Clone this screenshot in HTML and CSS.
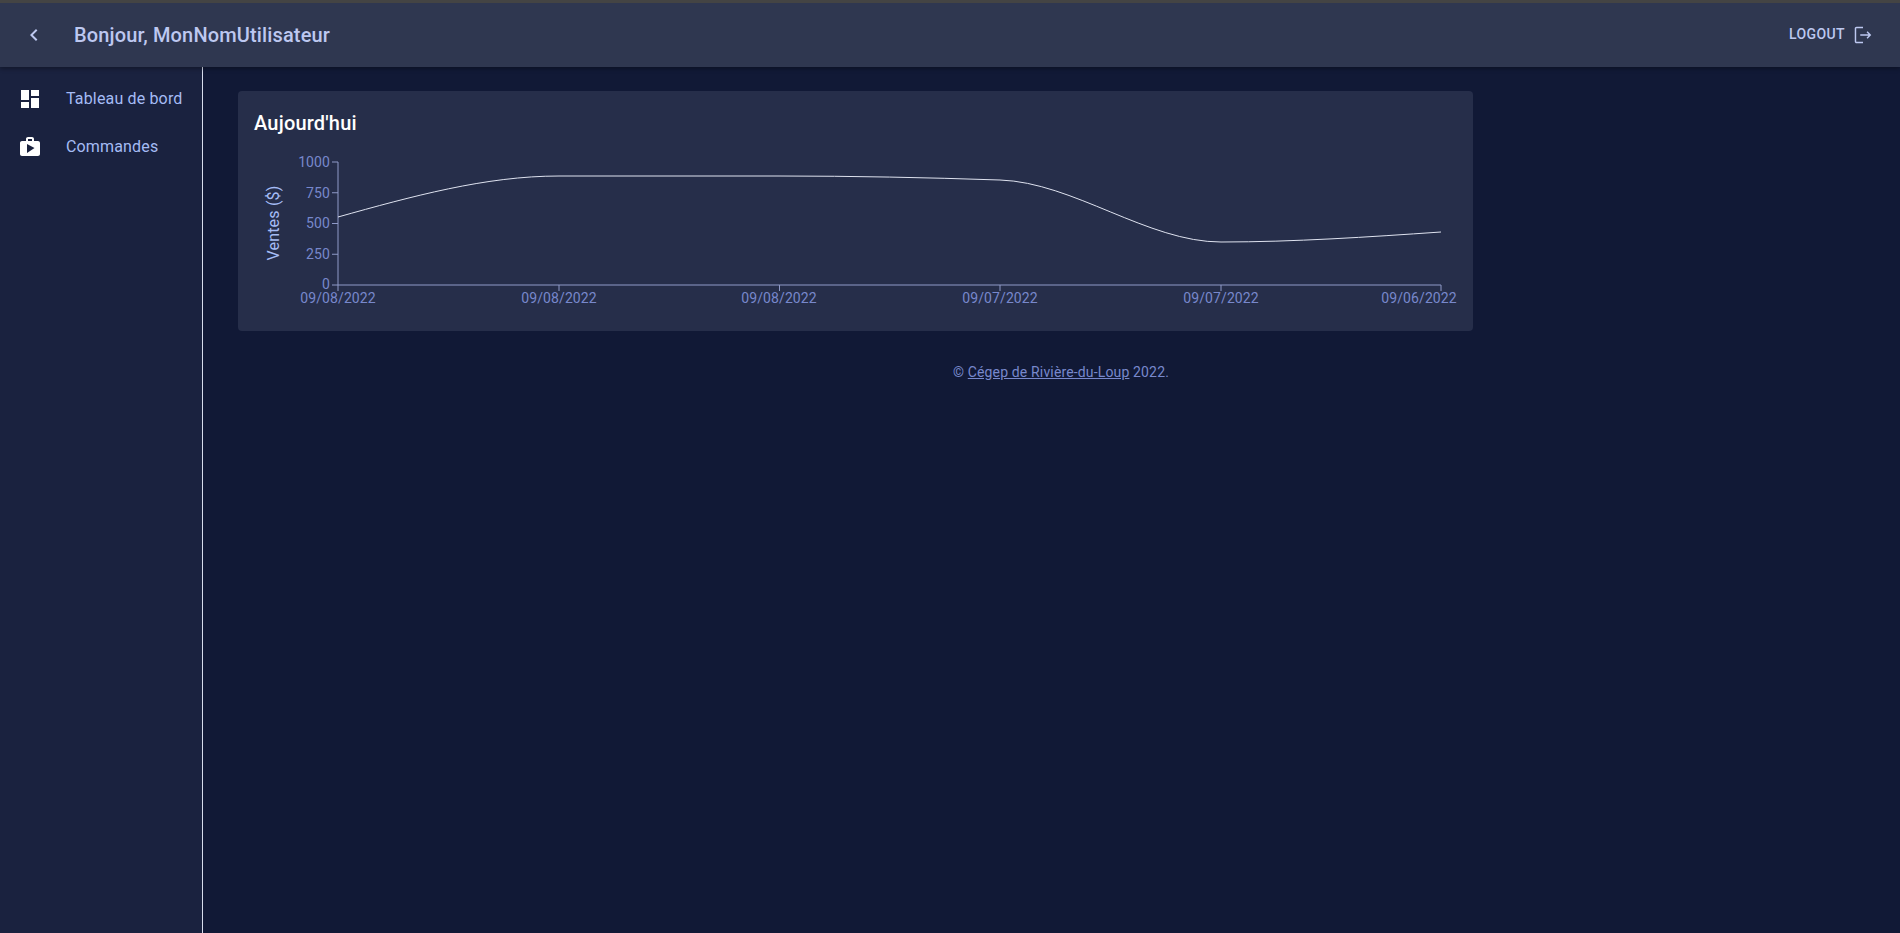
FILE: index.html
```html
<!doctype html>
<html>
<head>
<title>Tableau de bord</title>
<link rel="stylesheet" href="styles.css">
</head>
<body>

<header class="appbar">
    <button class="back" aria-label="back">
        <svg viewBox="0 0 24 24" width="24" height="24"><path d="M15.41 7.41 14 6l-6 6 6 6 1.41-1.41L10.83 12z"/></svg>
    </button>
    <h1 class="greeting">Bonjour, MonNomUtilisateur</h1>
    <button class="logout">
        <span>Logout</span>
        <svg viewBox="0 0 24 24" width="22" height="22"><path d="m17 8-1.1 1.1 2.1 2.1H9v1.6h9l-2.1 2.1L17 16l4-4-4-4zM5 4.6h7V3H5c-1.1 0-2 .9-2 2v14c0 1.1.9 2 2 2h7v-1.6H5c-.2 0-.4-.2-.4-.4V5c0-.2.2-.4.4-.4z"/></svg>
    </button>
</header>

<div class="below">
    <nav class="sidebar">
        <a class="navitem">
            <svg viewBox="0 0 24 24" width="24" height="24"><path d="M3 13h8V3H3v10zm0 8h8v-6H3v6zm10 0h8V11h-8v10zm0-18v6h8V3h-8z"/></svg>
            <span>Tableau de bord</span>
        </a>
        <a class="navitem">
            <svg viewBox="0 0 24 24" width="24" height="24"><path d="M20 6h-4V4c0-1.11-.89-2-2-2h-4c-1.11 0-2 .89-2 2v2H4c-1.11 0-1.99.89-1.99 2L2 19c0 1.11.89 2 2 2h16c1.11 0 2-.89 2-2V8c0-1.11-.89-2-2-2zM10 4h4v2h-4V4zm-1 14V9l7.5 4L9 18z"/></svg>
            <span>Commandes</span>
        </a>
    </nav>

    <main class="content">
        <section class="card">
            <h2 class="cardtitle">Aujourd'hui</h2>
            <svg class="chart" width="1235" height="162" viewBox="0 0 1235 162">
                <text class="ylabel" transform="translate(41 70) rotate(-90)" text-anchor="middle">Ventes ($)</text>
                <g class="axis">
                    <path d="M94 9H100V132M94 39.75H100M94 70.5H100M94 101.25H100M94 132H100"/>
                    <path d="M100 132H1203M100 132V138M321 132V138M541.5 132V138M762 132V138M983 132V138M1203 132V138"/>
                </g>
                <g class="ticks" text-anchor="end">
                    <text x="92" y="14">1000</text>
                    <text x="92" y="45">750</text>
                    <text x="92" y="75">500</text>
                    <text x="92" y="106">250</text>
                    <text x="92" y="136">0</text>
                </g>
                <g class="ticks" text-anchor="middle">
                    <text x="100" y="150">09/08/2022</text>
                    <text x="321" y="150">09/08/2022</text>
                    <text x="541" y="150">09/08/2022</text>
                    <text x="762" y="150">09/07/2022</text>
                    <text x="983" y="150">09/07/2022</text>
                    <text x="1181" y="150">09/06/2022</text>
                </g>
                <path class="line" d="M100 64C173.5 43.5 247.5 23 321 23C394 23 468 23 541 23C615 23 688.5 24.5 762 27C835.5 29.5 909.5 89 983 89C1056 89 1130 84 1203 79"/>
            </svg>
        </section>
        <p class="copyright">© <a>Cégep de Rivière-du-Loup</a> 2022.</p>
    </main>
</div>

</body>
</html>
```

FILE: styles.css
```css
html,body{
    height: 100%;
    margin: 0;
}
body{
    background-color: #111936;
    color: #bdc8f0;
    font-family: Roboto, "Liberation Sans", sans-serif;
    display: flex;
    flex-direction: column;
    overflow: hidden;
}
button{
    border: 0;
    background: none;
    color: inherit;
    font-family: inherit;
    padding: 0;
}
svg{
    fill: currentColor;
    display: block;
}
.appbar{
    height: 64px;
    flex: none;
    border-top: 3px solid #444444;
    background-color: #2f3750;
    box-shadow: 0 2px 4px rgba(0,0,0,.3);
    display: flex;
    align-items: center;
    padding-left: 22px;
    padding-right: 26px;
    position: relative;
}
.back{
    width: 24px;
    height: 24px;
    margin-right: 28px;
}
.greeting{
    flex: 1;
    margin: 0;
    font-size: 20px;
    font-weight: 500;
    line-height: 1.6;
    letter-spacing: .14px;
}
.logout{
    display: flex;
    align-items: center;
    gap: 7px;
    font-size: 14px;
    font-weight: 500;
    letter-spacing: .4px;
    text-transform: uppercase;
}
.logout span{
    margin-bottom: 2px;
}
.below{
    flex: 1;
    display: flex;
    min-height: 0;
}
.sidebar{
    width: 202px;
    flex: none;
    background-color: #1a223f;
    border-right: 1px solid #d7dcec;
    padding-top: 8px;
}
.navitem{
    display: flex;
    align-items: center;
    height: 48px;
    padding-left: 18px;
    color: #a5bcf5;
    font-size: 16px;
    letter-spacing: .16px;
}
.navitem svg{
    color: #fff;
    margin-right: 24px;
}
.navitem span{
    margin-bottom: 2px;
}
.content{
    flex: 1;
    padding: 24px 0 0 35px;
}
.card{
    width: 1235px;
    height: 240px;
    box-sizing: border-box;
    background-color: #262e4a;
    border-radius: 4px;
    padding: 16px;
}
.cardtitle{
    margin: 0 0 14px;
    color: #fff;
    font-size: 20px;
    font-weight: 500;
    line-height: 1.6;
    letter-spacing: .2px;
}
.chart{
    margin-left: -16px;
    fill: none;
}
.axis path{
    stroke: #8f9ac8;
    stroke-width: 1;
    fill: none;
}
.ticks text{
    fill: #7888cc;
    font-size: 14px;
    letter-spacing: .1px;
}
.ylabel{
    fill: #a5bcf5;
    font-size: 16px;
    letter-spacing: .2px;
}
.line{
    fill: none;
    stroke: #dfe3f0;
    stroke-width: 1;
}
.copyright{
    width: 1646px;
    margin: 31px 0 0;
    text-align: center;
    color: #7888cc;
    font-size: 14px;
    line-height: 1.43;
    letter-spacing: .15px;
}
.copyright a{
    text-decoration: underline;
}
```
